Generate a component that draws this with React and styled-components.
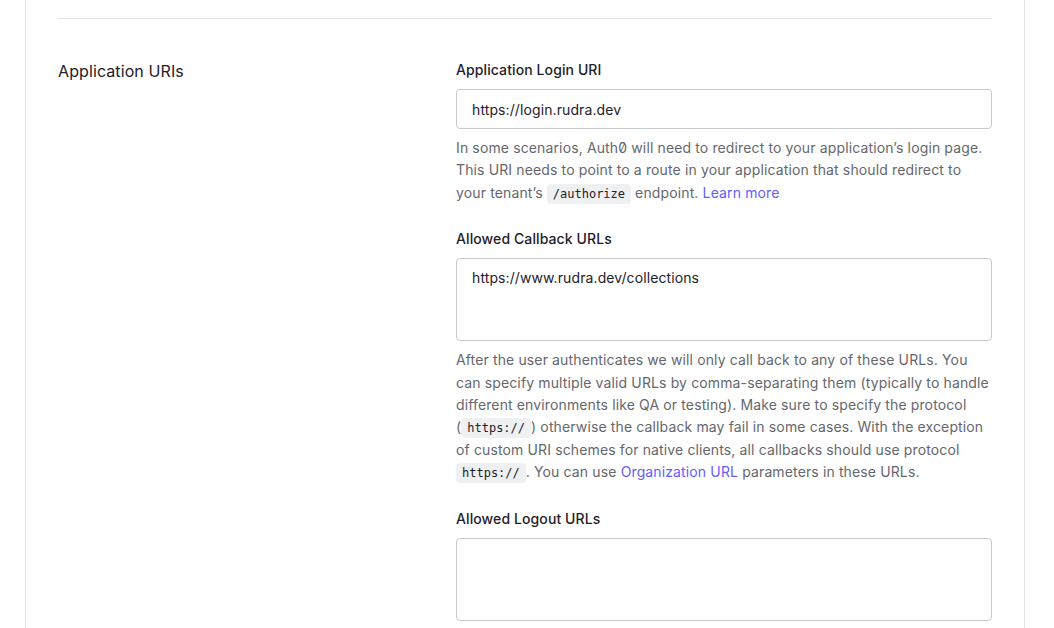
import React from "react";
import styled, { createGlobalStyle } from "styled-components";

const Global = createGlobalStyle`
  html, body { margin: 0; padding: 0; background: #fff; }
  body { font-family: Inter, "Noto Sans", sans-serif; color: #1e212a; -webkit-font-smoothing: antialiased; }
  * { box-sizing: border-box; }
`;

const Page = styled.div`
  padding: 0 29px 0 25px;
  height: 628px;
  overflow: hidden;
`;

const Card = styled.div`
  border-left: 1px solid #e3e4e6;
  border-right: 1px solid #e3e4e6;
  padding: 18px 32px 40px;
  min-height: 700px;
`;

const Divider = styled.hr`
  border: 0;
  border-top: 1px solid #e3e4e6;
  margin: 0;
`;

const Section = styled.section`
  display: grid;
  grid-template-columns: 1fr 536px;
  padding-top: 41px;
`;

const SectionTitle = styled.h3`
  margin: 0;
  font-size: 16px;
  line-height: 22px;
  font-weight: 400;
  letter-spacing: 0.1px;
  color: #1e212a;
`;

const Fields = styled.div`
  display: flex;
  flex-direction: column;
  gap: 25px;
`;

const Field = styled.div`
  display: flex;
  flex-direction: column;
`;

const Label = styled.label`
  font-size: 14px;
  line-height: 20px;
  font-weight: 500;
  letter-spacing: 0.1px;
  color: #1e212a;
  margin-bottom: 9px;
`;

const Input = styled.input`
  height: 40px;
  width: 100%;
  border: 1px solid #c9cace;
  border-radius: 4px;
  padding: 0 15px;
  font-family: inherit;
  font-size: 14px;
  letter-spacing: 0.1px;
  color: #1e212a;
  outline: none;
`;

const TextArea = styled.textarea`
  height: 83px;
  width: 100%;
  border: 1px solid #c9cace;
  border-radius: 4px;
  padding: 9px 15px;
  font-family: inherit;
  font-size: 14px;
  line-height: 20px;
  letter-spacing: 0.1px;
  color: #1e212a;
  resize: none;
  outline: none;
`;

const Help = styled.p`
  margin: 8px 0 0;
  font-size: 14px;
  line-height: 22.4px;
  letter-spacing: 0.13px;
  color: #65676e;
`;

const Code = styled.code`
  font-family: "DejaVu Sans Mono", "Liberation Mono", monospace;
  font-size: 12px;
  line-height: 1;
  letter-spacing: 0;
  color: #1e212a;
  background: #eff0f2;
  border-radius: 4px;
  padding: 3px 6px;
`;

const Link = styled.a`
  color: #635dff;
  text-decoration: none;
`;

const Zero = styled.span`
  font-variant-numeric: slashed-zero;
`;

export default function App() {
  return (
    <>
      <Global />
      <Page>
        <Card>
          <Divider />
          <Section>
            <SectionTitle>Application URIs</SectionTitle>
            <Fields>
              <Field>
                <Label>Application Login URI</Label>
                <Input defaultValue="https://login.rudra.dev" />
                <Help>
                  In some scenarios, Auth<Zero>0</Zero> will need to redirect to your application’s login page.
                  This URI needs to point to a route in your application that should redirect to your
                  tenant’s <Code>/authorize</Code> endpoint. <Link href="#">Learn more</Link>
                </Help>
              </Field>
              <Field>
                <Label>Allowed Callback URLs</Label>
                <TextArea defaultValue="https://www.rudra.dev/collections" />
                <Help>
                  After the user authenticates we will only call back to any of these URLs. You can specify
                  multiple valid URLs by comma-separating them (typically to handle different environments
                  like QA or testing). Make sure to specify the protocol (<Code>https://</Code>) otherwise the
                  callback may fail in some cases. With the exception of custom URI schemes for native
                  clients, all callbacks should use protocol <Code>https://</Code>. You can use{" "}
                  <Link href="#">Organization URL</Link> parameters in these URLs.
                </Help>
              </Field>
              <Field>
                <Label>Allowed Logout URLs</Label>
                <TextArea defaultValue="" />
              </Field>
            </Fields>
          </Section>
        </Card>
      </Page>
    </>
  );
}
